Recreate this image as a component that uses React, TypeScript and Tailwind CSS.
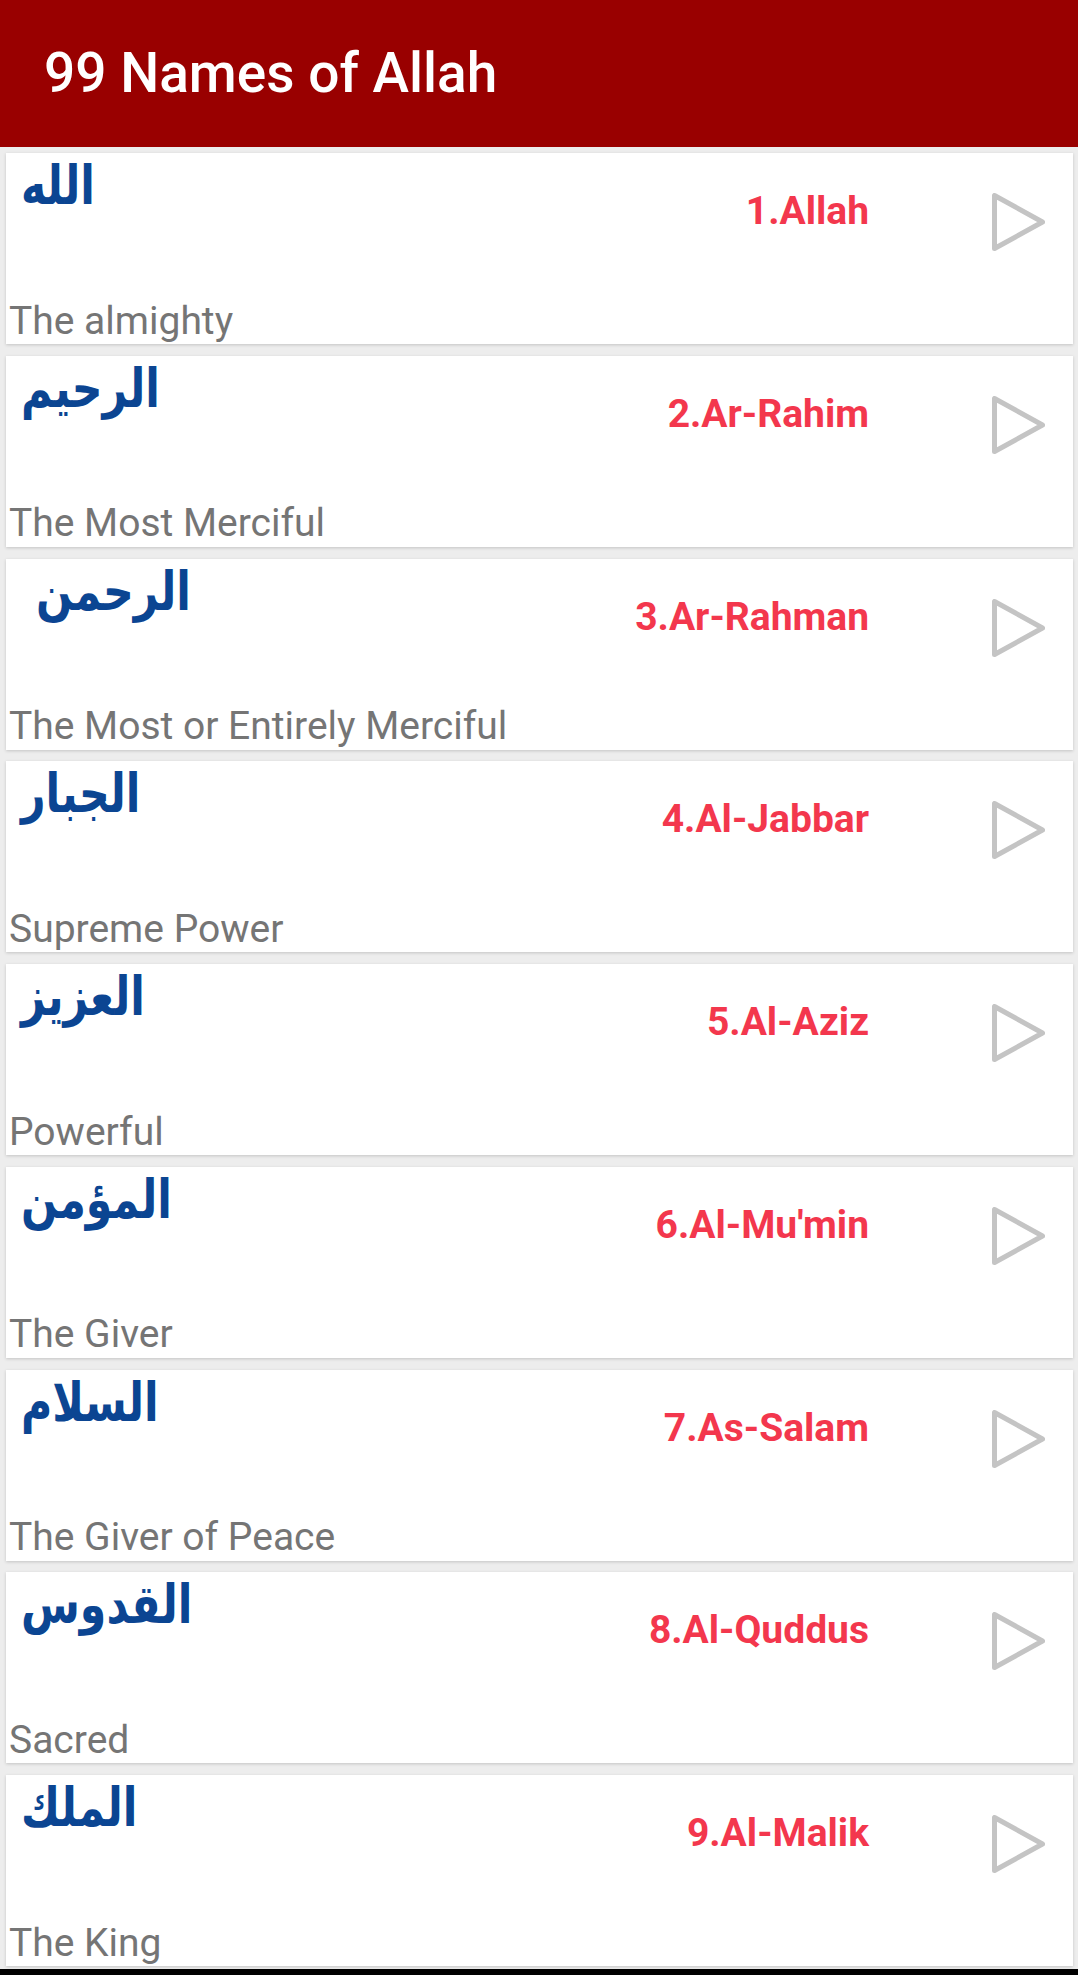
import React from "react";

type Item = { ar: string; en: string; desc: string; arPad?: number };

const items: Item[] = [
  { ar: "الله", en: "1.Allah", desc: "The almighty" },
  { ar: "الرحيم", en: "2.Ar-Rahim", desc: "The Most Merciful" },
  { ar: "الرحمن", en: "3.Ar-Rahman", desc: "The Most or Entirely Merciful", arPad: 15 },
  { ar: "الجبار", en: "4.Al-Jabbar", desc: "Supreme Power" },
  { ar: "العزيز", en: "5.Al-Aziz", desc: "Powerful" },
  { ar: "المؤمن", en: "6.Al-Mu'min", desc: "The Giver" },
  { ar: "السلام", en: "7.As-Salam", desc: "The Giver of Peace" },
  { ar: "القدوس", en: "8.Al-Quddus", desc: "Sacred" },
  { ar: "الملك", en: "9.Al-Malik", desc: "The King" },
];

function PlayIcon() {
  return (
    <svg width="53" height="58" viewBox="0 0 53 58" className="block">
      <polygon
        points="2.5,2.5 2.5,55.5 50.5,29"
        fill="none"
        stroke="#c4c4c4"
        strokeWidth="5"
        strokeLinejoin="round"
      />
    </svg>
  );
}

function Card({ item }: { item: Item }) {
  return (
    <div className="flex h-[191px] shrink-0 flex-col bg-white shadow-[0_1px_3px_rgba(0,0,0,0.18)]">
      <div className="flex flex-1 items-start">
        <div className={"pt-[6px] " + (item.arPad ? "pl-[30px]" : "pl-[15px]")}>
          <div
            dir="rtl"
            className="origin-left scale-x-[0.79] text-[54px] font-bold leading-none text-[#0b4592]"
            style={{ fontFamily: '"DejaVu Sans", sans-serif' }}
          >
            {item.ar}
          </div>
        </div>
        <div className="flex-1" />
        <div
          className="pt-[39px] text-[39px] font-bold leading-none text-[#f3374d]"
          style={{ fontFamily: "Roboto, sans-serif" }}
        >
          {item.en}
        </div>
        <div className="ml-[123px] mr-[28px] pt-[40px]">
          <PlayIcon />
        </div>
      </div>
      <div
        className="pb-[3.5px] pl-[3px] text-[39px] leading-none text-[#757575]"
        style={{ fontFamily: "Roboto, sans-serif" }}
      >
        {item.desc}
      </div>
    </div>
  );
}

export default function App() {
  return (
    <div className="flex h-[1975px] w-[1078px] flex-col overflow-hidden bg-[#ededed]">
      <div className="flex h-[147px] shrink-0 items-center bg-[#990000] pl-[44px]">
        <span
          className="text-[55px] font-medium leading-none text-white"
          style={{ fontFamily: "Roboto, sans-serif" }}
        >
          99 Names of Allah
        </span>
      </div>
      <div className="flex flex-1 flex-col gap-[11.75px] overflow-hidden pl-[6px] pr-[5px] pt-[6px]">
        {items.map((it) => (
          <Card key={it.en} item={it} />
        ))}
      </div>
      <div className="h-[6px] shrink-0 bg-black" />
    </div>
  );
}
